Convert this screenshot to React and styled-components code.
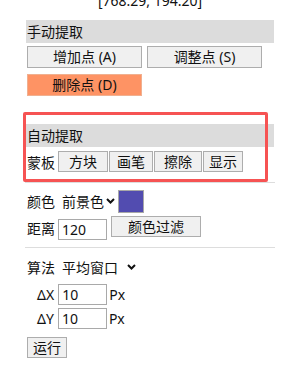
import React from 'react';
import styled, { createGlobalStyle } from 'styled-components';

const GlobalStyle = createGlobalStyle`
  body {
    margin: 0;
    background: #ffffff;
    font-family: "Noto Sans", "Noto Sans CJK SC", sans-serif;
    font-size: 14px;
    color: #111;
  }
`;

const Page = styled.div`
  position: relative;
  width: 283px;
  height: 381px;
  overflow: hidden;
`;

const Panel = styled.div`
  width: 248px;
  margin-left: 26px;
  display: flex;
  flex-direction: column;
`;

const Coord = styled.div`
  text-align: center;
  height: 20px;
  line-height: 18px;
  margin-top: -8px;
  margin-bottom: 8px;
`;

const SectionHeader = styled.div`
  background: #dcdcdc;
  height: 23px;
  line-height: 23px;
  padding-left: 1px;
`;

const ButtonGrid = styled.div`
  display: grid;
  grid-template-columns: 115px 115px;
  column-gap: 5px;
  row-gap: 6px;
  margin: 3px 0 0 1px;
`;

const Btn = styled.button`
  font: inherit;
  color: #111;
  height: ${p => p.h || 22}px;
  width: ${p => (p.w ? `${p.w}px` : 'auto')};
  padding: 0;
  background: ${p => (p.danger ? '#fe9364' : '#f0f0f0')};
  border: 1px solid ${p => (p.danger ? '#f0b090' : '#adadad')};
  line-height: 1;
  cursor: pointer;
`;

const Row = styled.div`
  display: flex;
  align-items: center;
  margin-top: ${p => p.mt || 0}px;
  padding-left: ${p => p.indent || 1}px;
  height: ${p => p.h || 22}px;
`;

const Label = styled.span`
  white-space: nowrap;
`;

const SelectText = styled.span`
  display: inline-flex;
  align-items: center;
  gap: ${p => p.gap || 2}px;
  margin-left: 7px;
`;

const Swatch = styled.div`
  width: 24px;
  height: 21px;
  background: #524cb0;
  border: 1px solid #a8a8a8;
  margin-left: 3px;
`;

const Input = styled.input`
  font: inherit;
  width: 49px;
  height: 21px;
  box-sizing: border-box;
  border: 1px solid #a9a9a9;
  padding: 0 3px;
  margin: ${p => p.m || 0};
  color: #111;
`;

const Divider = styled.hr`
  border: none;
  border-top: 1px solid #dddddd;
  width: 250px;
  margin: ${p => p.m};
`;

const MaskGroup = styled.div`
  display: flex;
  gap: 1px;
  margin-left: 3px;
`;

const Annotation = styled.div`
  position: absolute;
  left: 23px;
  top: 112px;
  width: 245px;
  height: 70px;
  box-sizing: border-box;
  border: 3px solid #f65353;
  border-radius: 2px;
  pointer-events: none;
`;

const Spacer = styled.div`
  height: ${p => p.h}px;
`;

const Chevron = () => (
  <svg width="9" height="6" viewBox="0 0 9 6">
    <polyline points="1,1 4.5,4.5 8,1" fill="none" stroke="#111" strokeWidth="2" />
  </svg>
);

export default function App() {
  return (
    <Page>
      <GlobalStyle />
      <Panel>
        <Coord>[768.29, 194.20]</Coord>
        <SectionHeader>手动提取</SectionHeader>
        <ButtonGrid>
          <Btn>增加点 (A)</Btn>
          <Btn>调整点 (S)</Btn>
          <Btn danger>删除点 (D)</Btn>
        </ButtonGrid>

        <Spacer h={28} />
        <SectionHeader>自动提取</SectionHeader>
        <Row mt={4} h={21}>
          <Label>蒙板</Label>
          <MaskGroup>
            <Btn w={50} h={21}>方块</Btn>
            <Btn w={44} h={21}>画笔</Btn>
            <Btn w={48} h={21}>擦除</Btn>
            <Btn w={40} h={21}>显示</Btn>
          </MaskGroup>
        </Row>
        <Divider m="10px 0 0 -1px" />

        <Row mt={7} h={22}>
          <Label>颜色</Label>
          <SelectText>前景色<Chevron /></SelectText>
          <Swatch />
        </Row>
        <Row mt={4} h={24} style={{ alignItems: 'flex-start' }}>
          <Label style={{ marginTop: 2 }}>距离</Label>
          <Input defaultValue="120" m="3px 0 0 3px" />
          <Btn w={90} h={21} style={{ marginLeft: 4 }}>颜色过滤</Btn>
        </Row>
        <Divider m="7px 0 0 -1px" />

        <Row mt={8} h={22}>
          <Label>算法</Label>
          <SelectText gap={9}>平均窗口<Chevron /></SelectText>
        </Row>
        <Row mt={6} h={21} indent={11}>
          <Label>ΔX</Label>
          <Input defaultValue="10" m="0 0 0 4px" />
          <Label style={{ marginLeft: 2 }}>Px</Label>
        </Row>
        <Row mt={3} h={21} indent={11}>
          <Label>ΔY</Label>
          <Input defaultValue="10" m="0 0 0 4px" />
          <Label style={{ marginLeft: 2 }}>Px</Label>
        </Row>
        <Row mt={8} h={21}>
          <Btn w={40} h={21}>运行</Btn>
        </Row>
      </Panel>
      <Annotation />
    </Page>
  );
}
